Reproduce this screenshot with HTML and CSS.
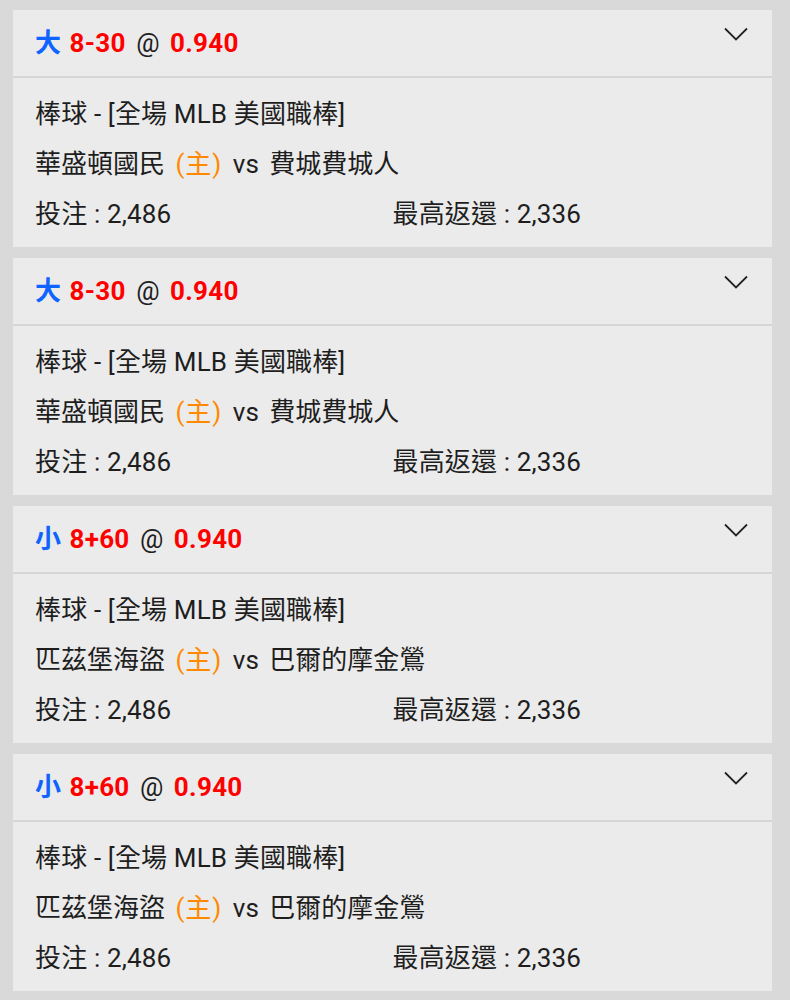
FILE: index.html
```html
<!DOCTYPE html>
<html lang="zh-Hant">
<head>
<meta charset="utf-8">
<title>Bets</title>
<link rel="stylesheet" href="styles.css">
</head>
<body>
<div class="list">
  <div class="card">
    <div class="head">
      <div class="title"><span class="side">大</span> <span class="red">8-30</span> <span class="at">@</span> <span class="red">0.940</span></div>
      <svg class="chev" width="24" height="14" viewBox="0 0 24 14"><polyline points="1,1.5 12,12.5 23,1.5" fill="none" stroke="#222" stroke-width="1.8"/></svg>
    </div>
    <div class="body">
      <div class="line">棒球 - [全場 MLB 美國職棒]</div>
      <div class="line team">華盛頓國民 <span class="home">(主)</span> vs 費城費城人</div>
      <div class="line cols"><span>投注 : 2,486</span><span>最高返還 : 2,336</span></div>
    </div>
  </div>
  <div class="card">
    <div class="head">
      <div class="title"><span class="side">大</span> <span class="red">8-30</span> <span class="at">@</span> <span class="red">0.940</span></div>
      <svg class="chev" width="24" height="14" viewBox="0 0 24 14"><polyline points="1,1.5 12,12.5 23,1.5" fill="none" stroke="#222" stroke-width="1.8"/></svg>
    </div>
    <div class="body">
      <div class="line">棒球 - [全場 MLB 美國職棒]</div>
      <div class="line team">華盛頓國民 <span class="home">(主)</span> vs 費城費城人</div>
      <div class="line cols"><span>投注 : 2,486</span><span>最高返還 : 2,336</span></div>
    </div>
  </div>
  <div class="card">
    <div class="head">
      <div class="title"><span class="side">小</span> <span class="red">8+60</span> <span class="at">@</span> <span class="red">0.940</span></div>
      <svg class="chev" width="24" height="14" viewBox="0 0 24 14"><polyline points="1,1.5 12,12.5 23,1.5" fill="none" stroke="#222" stroke-width="1.8"/></svg>
    </div>
    <div class="body">
      <div class="line">棒球 - [全場 MLB 美國職棒]</div>
      <div class="line team">匹茲堡海盜 <span class="home">(主)</span> vs 巴爾的摩金鶯</div>
      <div class="line cols"><span>投注 : 2,486</span><span>最高返還 : 2,336</span></div>
    </div>
  </div>
  <div class="card">
    <div class="head">
      <div class="title"><span class="side">小</span> <span class="red">8+60</span> <span class="at">@</span> <span class="red">0.940</span></div>
      <svg class="chev" width="24" height="14" viewBox="0 0 24 14"><polyline points="1,1.5 12,12.5 23,1.5" fill="none" stroke="#222" stroke-width="1.8"/></svg>
    </div>
    <div class="body">
      <div class="line">棒球 - [全場 MLB 美國職棒]</div>
      <div class="line team">匹茲堡海盜 <span class="home">(主)</span> vs 巴爾的摩金鶯</div>
      <div class="line cols"><span>投注 : 2,486</span><span>最高返還 : 2,336</span></div>
    </div>
  </div>
</div>
</body>
</html>
```
FILE: styles.css
```css
html, body {
  margin: 0;
  padding: 0;
  background: #d9d9d9;
}
body {
  font-family: Roboto, "Noto Sans CJK TC", sans-serif;
  color: #1e1e1e;
}
.list {
  display: flex;
  flex-direction: column;
  gap: 11px;
  padding: 10px 18px 10px 13px;
}
.card {
  background: #ebebeb;
}
.head {
  height: 66px;
  display: flex;
  align-items: center;
  justify-content: space-between;
  padding: 0 24px 0 22px;
  border-bottom: 2px solid #d6d6d6;
}
.title {
  font-size: 26px;
  line-height: 30px;
  white-space: pre;
}
.side {
  color: #0f63ff;
  font-weight: 700;
  margin-right: 2px;
}
.red {
  color: #ff0000;
  font-weight: 700;
  letter-spacing: 0.3px;
}
.at {
  color: #1e1e1e;
  margin: 0 4px;
}
.chev {
  align-self: flex-start;
  margin-top: 17px;
}
.body {
  padding: 11px 22px 8px 22px;
  font-size: 26px;
}
.line {
  height: 50px;
  line-height: 50px;
  white-space: nowrap;
  letter-spacing: 0.15px;
}
.team {
  word-spacing: 4px;
  letter-spacing: 0;
}
.home {
  color: #ff8a00;
  letter-spacing: 1px;
}
.cols {
  display: grid;
  grid-template-columns: 1fr 1fr;
}
```
